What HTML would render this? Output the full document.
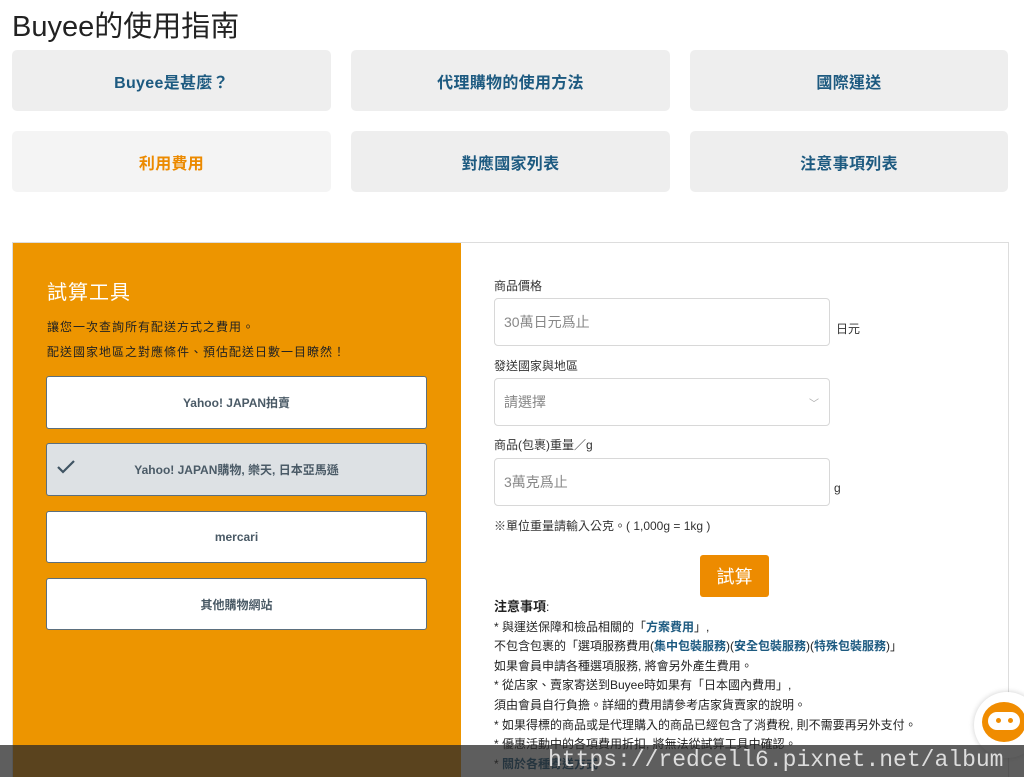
<!DOCTYPE html>
<html><head><meta charset="utf-8"><style>
*{box-sizing:border-box;margin:0;padding:0}
html,body{width:1024px;height:777px;overflow:hidden}
body{background:#fff;font-family:"Liberation Sans","Noto Sans CJK TC",sans-serif;color:#333;position:relative}
.abs{position:absolute}
h1{position:absolute;left:12px;top:3px;font-size:29px;font-weight:normal;color:#222}
.nav{position:absolute;width:319px;height:61px;background:#eee;border-radius:5px;display:flex;align-items:center;justify-content:center;font-size:16px;font-weight:bold;color:#1d5a80;letter-spacing:0.3px}
.panel{position:absolute;left:12px;top:242px;width:997px;height:540px;border:1px solid #ddd}
.left{position:absolute;left:13px;top:243px;width:448px;height:540px;background:#ed9500}
.opt{position:absolute;left:46px;width:381px;background:#fff;border:1.5px solid #5b6f7e;border-radius:3px;display:flex;align-items:center;justify-content:center;font-size:12px;font-weight:bold;color:#4a5a66}
.lbl{position:absolute;left:494px;font-size:12px;color:#333}
.inp{position:absolute;left:494px;width:336px;height:48px;border:1px solid #d8d8d8;border-radius:4px;padding-left:9px;display:flex;align-items:center;font-size:14px;color:#888}
.notes{position:absolute;left:494px;top:597px;font-size:12px;line-height:19.6px;color:#222}
.notes b{font-size:13px}
.lk{color:#1d5a80;font-weight:bold}
</style></head><body>
<h1>Buyee的使用指南</h1>
<div class="nav" style="left:12px;top:50px">Buyee是甚麼？</div>
<div class="nav" style="left:351px;top:50px">代理購物的使用方法</div>
<div class="nav" style="left:690px;top:50px;width:318px">國際運送</div>
<div class="nav" style="left:12px;top:131px;background:#f4f4f4;color:#ec8a00">利用費用</div>
<div class="nav" style="left:351px;top:131px">對應國家列表</div>
<div class="nav" style="left:690px;top:131px;width:318px">注意事項列表</div>

<div class="panel"></div>
<div class="left"></div>
<div class="abs" style="left:47px;top:276px;font-size:20px;color:#fff;letter-spacing:1px">試算工具</div>
<div class="abs" style="left:47px;top:318px;font-size:12px;color:#222;letter-spacing:1px">讓您一次查詢所有配送方式之費用。</div>
<div class="abs" style="left:47px;top:343px;font-size:12px;color:#222;letter-spacing:1px">配送國家地區之對應條件、預估配送日數一目瞭然！</div>
<div class="opt" style="top:376px;height:53px">Yahoo! JAPAN拍賣</div>
<div class="opt" style="top:443px;height:53px;background:#dde1e4">Yahoo! JAPAN購物, 樂天, 日本亞馬遜
<svg class="abs" style="left:9px;top:15px" width="20" height="16" viewBox="0 0 20 16"><path d="M2 8 L7 13 L18 2" stroke="#3f5463" stroke-width="2.2" fill="none"/></svg></div>
<div class="opt" style="top:511px;height:52px">mercari</div>
<div class="opt" style="top:578px;height:52px">其他購物網站</div>

<div class="lbl" style="top:277px">商品價格</div>
<div class="inp" style="top:298px">30萬日元爲止</div>
<div class="abs" style="left:836px;top:320px;font-size:12px">日元</div>
<div class="lbl" style="top:357px">發送國家與地區</div>
<div class="inp" style="top:378px">請選擇<span class="abs" style="right:10px;top:16px;font-size:10px;color:#aaa">﹀</span></div>
<div class="lbl" style="top:436px">商品(包裹)重量／g</div>
<div class="inp" style="top:458px">3萬克爲止</div>
<div class="abs" style="left:834px;top:481px;font-size:12px">g</div>
<div class="lbl" style="top:517px">※單位重量請輸入公克。( 1,000g = 1kg )</div>
<div class="abs" style="left:700px;top:555px;width:69px;height:42px;background:#ed8b00;border-radius:3px;color:#fff;font-size:18px;display:flex;align-items:center;justify-content:center">試算</div>
<div class="notes"><b>注意事項</b>:<br>
* 與運送保障和檢品相關的「<span class="lk">方案費用</span>」,<br>
不包含包裹的「選項服務費用(<span class="lk">集中包裝服務</span>)(<span class="lk">安全包裝服務</span>)(<span class="lk">特殊包裝服務</span>)」<br>
如果會員申請各種選項服務, 將會另外產生費用。<br>
* 從店家、賣家寄送到Buyee時如果有「日本國內費用」,<br>
須由會員自行負擔。詳細的費用請參考店家貨賣家的說明。<br>
* 如果得標的商品或是代理購入的商品已經包含了消費稅, 則不需要再另外支付。<br>
* 優惠活動中的各項費用折扣, 將無法從試算工具中確認。<br>
* <span class="lk">關於各種寄送方式</span></div>

<div class="abs" style="left:974px;top:692px;width:66px;height:66px;border-radius:50%;background:#fff;box-shadow:0 0 6px rgba(0,0,0,.2)"></div>
<div class="abs" style="left:982px;top:702px;width:44px;height:40px;border-radius:50%;background:#f08c00"></div>
<div class="abs" style="left:988px;top:712px;width:32px;height:18px;border-radius:9px;background:#fff"></div>
<div class="abs" style="left:996px;top:718px;width:5px;height:5px;border-radius:50%;background:#f08c00"></div>
<div class="abs" style="left:1008px;top:718px;width:5px;height:5px;border-radius:50%;background:#f08c00"></div>

<div class="abs" style="left:0;top:745px;width:1024px;height:32px;background:rgba(40,40,40,.75)"></div>
<div class="abs" style="left:548px;top:747px;font-family:'Liberation Mono',monospace;font-size:23px;color:#ddd;white-space:nowrap">https://redcell6.pixnet.net/album</div>
</body></html>
